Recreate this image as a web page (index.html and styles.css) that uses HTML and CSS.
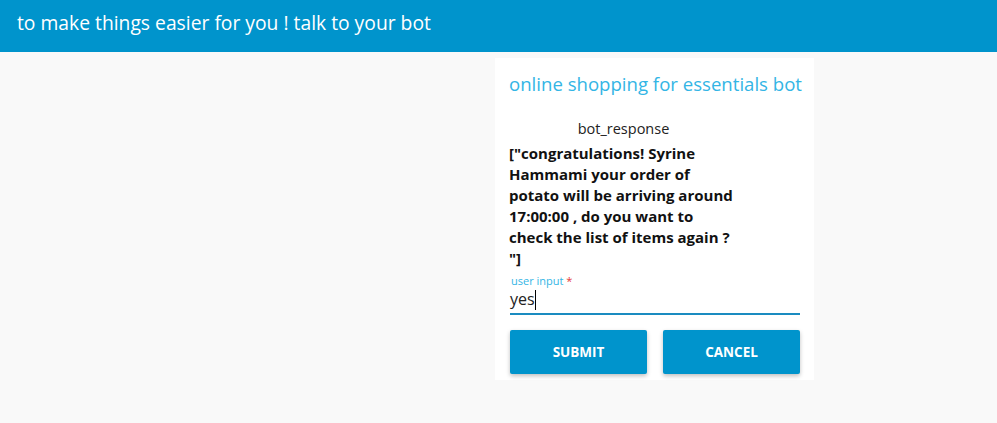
FILE: index.html
```html
<!DOCTYPE html>
<html>
<head>
<meta charset="utf-8">
<link rel="stylesheet" href="styles.css">
</head>
<body>
<header class="topbar">to make things easier for you ! talk to your bot</header>
<main class="main">
  <section class="card">
    <h1 class="card-title">online shopping for essentials bot</h1>
    <div class="response">
      <div class="response-label">bot_response</div>
      <div class="response-text">["congratulations! Syrine Hammami your order of potato will be arriving around 17:00:00 , do you want to check the list of items again ? "]</div>
    </div>
    <div class="field">
      <label class="field-label">user input <span class="req">*</span></label>
      <div class="field-input">yes<span class="caret"></span></div>
    </div>
    <div class="actions">
      <button class="btn">SUBMIT</button>
      <button class="btn">CANCEL</button>
    </div>
  </section>
</main>
</body>
</html>
```
FILE: styles.css
```css
html, body { margin: 0; padding: 0; }
body {
  background: #f9f9f9;
  font-family: "Open Sans", "Noto Sans", sans-serif;
  width: 997px;
  height: 423px;
  overflow: hidden;
}
.topbar {
  height: 52px;
  background: #0094cc;
  color: #fff;
  font-size: 19.3px;
  line-height: 46px;
  padding-left: 17px;
  box-sizing: border-box;
}
.main {
  display: flex;
  padding-left: 495px;
  padding-top: 6px;
}
.card {
  width: 319px;
  background: #fff;
  box-sizing: border-box;
  padding: 13px 14px 6px 14px;
}
.card-title {
  margin: 0;
  font-size: 18.6px;
  font-weight: normal;
  color: #33b5e5;
  line-height: 26px;
  white-space: nowrap;
}
.response {
  width: 229px;
  margin-top: 21px;
}
.response-label {
  text-align: center;
  font-size: 14.5px;
  color: #222;
  line-height: 22px;
  margin-bottom: 3px;
}
.response-text {
  font-weight: bold;
  font-size: 15px;
  line-height: 21px;
  color: #111;
}
.field {
  margin-top: 5px;
  padding-left: 1px;
  width: 290px;
}
.field-label {
  display: block;
  font-size: 11px;
  color: #33b5e5;
  line-height: 14px;
  padding-left: 1px;
}
.req { color: #e53935; }
.field-input {
  font-size: 16px;
  line-height: 22px;
  color: #222;
  border-bottom: 2px solid #1a8bc0;
  height: 25px;
  box-sizing: content-box;
}
.caret {
  display: inline-block;
  width: 1px;
  height: 20px;
  background: #000;
  vertical-align: -5px;
}
.actions {
  display: flex;
  gap: 16px;
  margin-top: 15px;
  padding-left: 1px;
}
.btn {
  width: 137px;
  height: 44px;
  border: none;
  border-radius: 2px;
  background: #0094cc;
  color: #fff;
  font-family: "Open Sans", "Noto Sans", sans-serif;
  font-weight: bold;
  font-size: 13.5px;
  box-shadow: 0 2px 4px rgba(0,0,0,0.25);
  padding: 0;
}
```
